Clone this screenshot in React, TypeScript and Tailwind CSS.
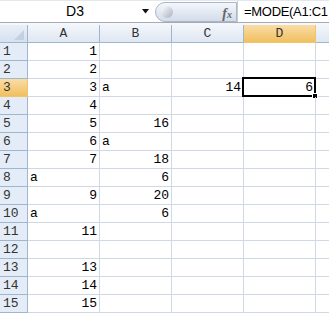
import React from "react";

type Row = { a?: string; b?: string; c?: string; d?: string };

const rows: Row[] = [
  { a: "1" },
  { a: "2" },
  { a: "3", b: "a", c: "14", d: "6" },
  { a: "4" },
  { a: "5", b: "16" },
  { a: "6", b: "a" },
  { a: "7", b: "18" },
  { a: "a", b: "6" },
  { a: "9", b: "20" },
  { a: "a", b: "6" },
  { a: "11" },
  {},
  { a: "13" },
  { a: "14" },
  { a: "15" },
];

const cellFont = { fontFamily: '"Liberation Mono", "DejaVu Sans Mono", monospace' };

function Cell({ value, selected }: { value?: string; selected?: boolean }) {
  const isNum = value !== undefined && /^\d+$/.test(value);
  return (
    <div
      className={`relative h-[18px] border-r border-b border-[#d0d7e5] text-[13px] leading-[17px] text-black ${
        isNum ? "pr-[2px] text-right" : "pl-[2px] text-left"
      }`}
      style={cellFont}
    >
      {value}
      {selected && (
        <div className="absolute -left-[2px] -top-[2px] h-[20px] w-[74px] border-2 border-black">
          <div className="absolute -bottom-[4px] -right-[4px] h-[6px] w-[6px] border border-white bg-black" />
        </div>
      )}
    </div>
  );
}

export default function App() {
  return (
    <div className="h-[320px] w-[329px] overflow-hidden bg-white" style={{ fontFamily: '"Liberation Sans", Arial, sans-serif' }}>
      {/* formula bar */}
      <div className="flex h-[23px] items-center overflow-hidden border-t border-b border-t-[#e3e7ee] border-b-[#a5acb5] bg-white">
        <div className="flex w-[152px] shrink-0 items-center">
          <span className="flex-1 pl-[8px] text-center text-[14px] text-black">D3</span>
          <svg width="8" height="5" viewBox="0 0 8 5" className="mr-[2px] shrink-0">
            <path d="M0 0h7L3.5 4.5z" fill="#111" />
          </svg>
        </div>
        <div className="relative ml-[3px] flex h-[20px] w-[82px] shrink-0 items-center rounded-l-full border border-[#aab7c8] bg-gradient-to-b from-[#f4f7fb] to-[#d3dcea]">
          <div className="ml-[5px] h-[12px] w-[12px] rounded-full bg-gradient-to-br from-[#ffffff] to-[#a9b2be]" />
          <span
            className="absolute right-[4px] top-[0px] text-[14px] font-bold italic text-[#666]"
            style={{ fontFamily: '"Liberation Serif", serif' }}
          >
            f<span className="text-[10px]">x</span>
          </span>
        </div>
        <div className="h-[21px] w-[1px] shrink-0 bg-[#c5ccd6]" />
        <span className="shrink-0 whitespace-nowrap pl-[6px] text-[13px] tracking-[-0.3px] text-black">=MODE(A1:C1</span>
      </div>
      <div className="h-[2px] bg-[#f4f6f9]" />

      {/* grid */}
      <div className="grid grid-cols-[28px_72px_72px_72px_72px_1fr]">
        {/* header row */}
        <div className="relative h-[18px] border-r border-b border-[#9eb6ce] bg-gradient-to-b from-[#e9eff7] to-[#d6e1ef]">
          <svg width="10" height="10" viewBox="0 0 10 10" className="absolute bottom-[2px] right-[3px]">
            <path d="M10 0V10H0z" fill="#c3d0e2" />
          </svg>
        </div>
        {["A", "B", "C"].map((l) => (
          <div
            key={l}
            className="h-[18px] border-r border-b border-[#9eb6ce] bg-gradient-to-b from-[#f3f6fb] to-[#dfe7f2] text-center text-[13px] leading-[17px] text-[#333]"
            style={cellFont}
          >
            {l}
          </div>
        ))}
        <div
          className="h-[18px] border-r border-b border-[#f2c36a] bg-gradient-to-b from-[#f9dca6] to-[#f1c05e] text-center text-[13px] leading-[17px] text-[#333]"
          style={cellFont}
        >
          D
        </div>
        <div className="h-[18px] border-b border-[#9eb6ce] bg-gradient-to-b from-[#f3f6fb] to-[#dfe7f2]" />

        {rows.map((r, i) => (
          <React.Fragment key={i}>
            <div
              className={`h-[18px] border-r border-b pl-[3px] text-[13px] leading-[17px] text-[#333] ${
                i === 2
                  ? "border-[#f2c36a] bg-gradient-to-b from-[#f9dca6] to-[#f1c05e]"
                  : "border-[#9eb6ce] bg-[#e4ecf7]"
              }`}
              style={cellFont}
            >
              {i + 1}
            </div>
            <Cell value={r.a} />
            <Cell value={r.b} />
            <Cell value={r.c} />
            <Cell value={r.d} selected={i === 2} />
            <div className="h-[18px] border-b border-[#d0d7e5]" />
          </React.Fragment>
        ))}
      </div>
    </div>
  );
}
